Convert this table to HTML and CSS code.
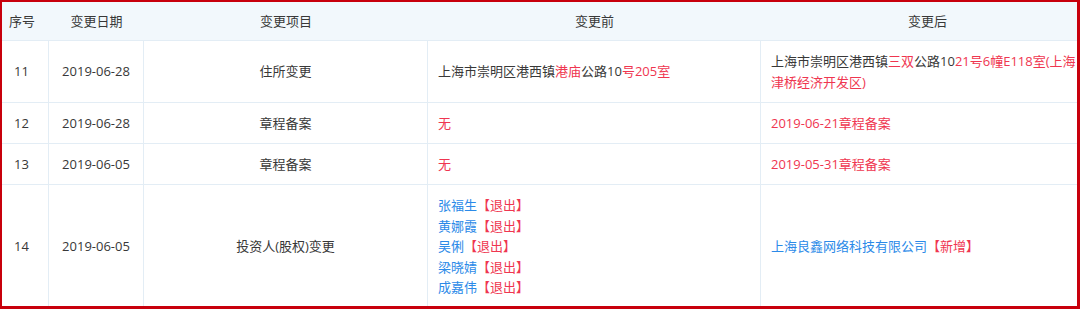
FILE: index.html
```html
<!DOCTYPE html>
<html lang="zh-CN">
<head>
<meta charset="utf-8">
<title>变更记录</title>
<link rel="stylesheet" href="styles.css">
</head>
<body>
<div class="frame">
  <table class="changes">
    <colgroup>
      <col class="c-no">
      <col class="c-date">
      <col class="c-item">
      <col class="c-before">
      <col class="c-after">
    </colgroup>
    <thead>
      <tr class="r-head">
        <th>序号</th>
        <th>变更日期</th>
        <th>变更项目</th>
        <th>变更前</th>
        <th>变更后</th>
      </tr>
    </thead>
    <tbody>
      <tr class="r-tall">
        <td class="center">11</td>
        <td class="center">2019-06-28</td>
        <td class="center">住所变更</td>
        <td>上海市崇明区港西镇<span class="red">港庙</span>公路10<span class="red">号205室</span></td>
        <td>上海市崇明区港西镇<span class="red">三双</span>公路10<span class="red">21号6幢E118室(上海</span><span class="red">津桥经济开发区)</span></td>
      </tr>
      <tr class="r-short">
        <td class="center">12</td>
        <td class="center">2019-06-28</td>
        <td class="center">章程备案</td>
        <td><span class="red">无</span></td>
        <td><span class="red">2019-06-21章程备案</span></td>
      </tr>
      <tr class="r-short">
        <td class="center">13</td>
        <td class="center">2019-06-05</td>
        <td class="center">章程备案</td>
        <td><span class="red">无</span></td>
        <td><span class="red">2019-05-31章程备案</span></td>
      </tr>
      <tr class="r-list">
        <td class="center">14</td>
        <td class="center">2019-06-05</td>
        <td class="center">投资人(股权)变更</td>
        <td>
          <div><span class="blue">张福生</span><span class="red">【退出】</span></div>
          <div><span class="blue">黄娜霞</span><span class="red">【退出】</span></div>
          <div><span class="blue">吴俐</span><span class="red">【退出】</span></div>
          <div><span class="blue">梁晓婧</span><span class="red">【退出】</span></div>
          <div><span class="blue">成嘉伟</span><span class="red">【退出】</span></div>
        </td>
        <td><span class="blue">上海良鑫网络科技有限公司</span><span class="red">【新增】</span></td>
      </tr>
    </tbody>
  </table>
</div>
</body>
</html>
```
FILE: styles.css
```css
html, body {
  margin: 0;
  padding: 0;
  background: #ffffff;
}

.frame {
  box-sizing: border-box;
  width: 1080px;
  height: 309px;
  border-style: solid;
  border-color: #c8000c;
  border-width: 2px 3px 3px 2px;
  overflow: hidden;
  background: #ffffff;
}

.changes {
  table-layout: fixed;
  width: 1099px;
  margin-left: -7px;
  border-collapse: separate;
  border-spacing: 0;
  font-family: "Open Sans", "Noto Sans CJK SC", sans-serif;
  font-size: 13px;
  line-height: 20.5px;
  color: #383838;
}

.c-no { width: 54px; }
.c-date { width: 95px; }
.c-item { width: 284px; }
.c-before { width: 333px; }
.c-after { width: 333px; }

.changes th {
  font-weight: normal;
  text-align: center;
  background: #f2f8fc;
  border-bottom: 1px solid #e3edf5;
  padding: 0 10px;
}

.changes td {
  border-right: 1px solid #e3edf5;
  border-bottom: 1px solid #e3edf5;
  padding: 0 10px;
  vertical-align: middle;
  text-align: left;
}

.changes td.center {
  text-align: center;
}

.r-head { height: 39px; }
.r-tall { height: 62px; }
.r-short { height: 41px; }
.r-list { height: 124px; }

.red { color: #ef3650; }
.blue { color: #2b8ae8; }
```
